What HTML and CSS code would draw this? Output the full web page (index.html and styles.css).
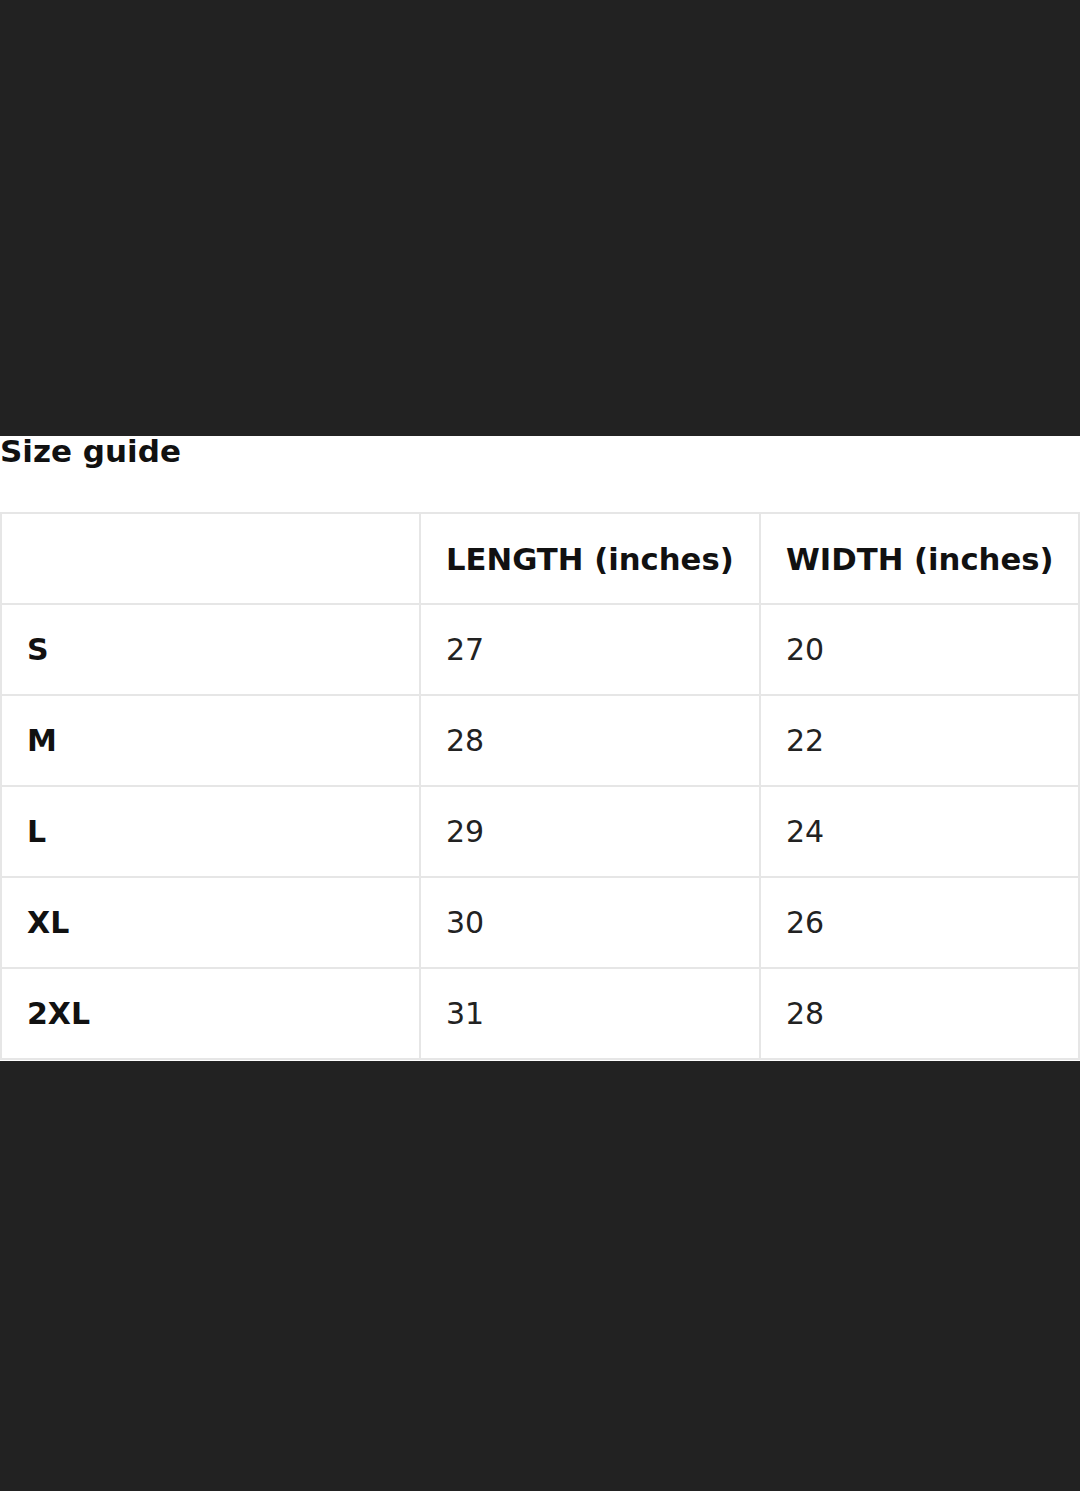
FILE: index.html
```html
<!DOCTYPE html>
<html>
<head>
<meta charset="utf-8">
<link rel="stylesheet" href="styles.css">
</head>
<body>
<div class="top"></div>
<section class="panel">
  <h2 class="title">Size guide</h2>
  <table class="sizes">
    <colgroup>
      <col class="c1"><col class="c2"><col class="c3">
    </colgroup>
    <thead>
      <tr><th></th><th>LENGTH (inches)</th><th>WIDTH (inches)</th></tr>
    </thead>
    <tbody>
      <tr><th>S</th><td>27</td><td>20</td></tr>
      <tr><th>M</th><td>28</td><td>22</td></tr>
      <tr><th>L</th><td>29</td><td>24</td></tr>
      <tr><th>XL</th><td>30</td><td>26</td></tr>
      <tr><th>2XL</th><td>31</td><td>28</td></tr>
    </tbody>
  </table>
</section>
<div class="bottom"></div>
</body>
</html>
```
FILE: styles.css
```css
html, body {
  margin: 0;
  padding: 0;
  background: #222222;
  font-family: "DejaVu Sans", "Liberation Sans", sans-serif;
}
.top {
  height: 436px;
}
.panel {
  background: #ffffff;
  padding-bottom: 1px;
}
.title {
  margin: 0;
  font-size: 31px;
  line-height: 30px;
  font-weight: bold;
  color: #111111;
}
.sizes {
  margin-top: 46px;
  width: 1078px;
  table-layout: fixed;
  border-collapse: collapse;
  border: 2px solid #e6e6e6;
}
.c1 { width: 419px; }
.c2 { width: 340px; }
.c3 { width: 319px; }
.sizes th, .sizes td {
  border: 2px solid #e6e6e6;
  height: 91px;
  padding: 0 0 0 25px;
  box-sizing: border-box;
  text-align: left;
  vertical-align: middle;
  font-size: 30px;
  color: #111111;
}
.sizes th {
  font-weight: bold;
}
.sizes thead th {
  font-size: 30.7px;
  padding-top: 2px;
}
.sizes td {
  font-weight: normal;
  color: #222222;
}
.bottom {
  height: 430px;
}
```
